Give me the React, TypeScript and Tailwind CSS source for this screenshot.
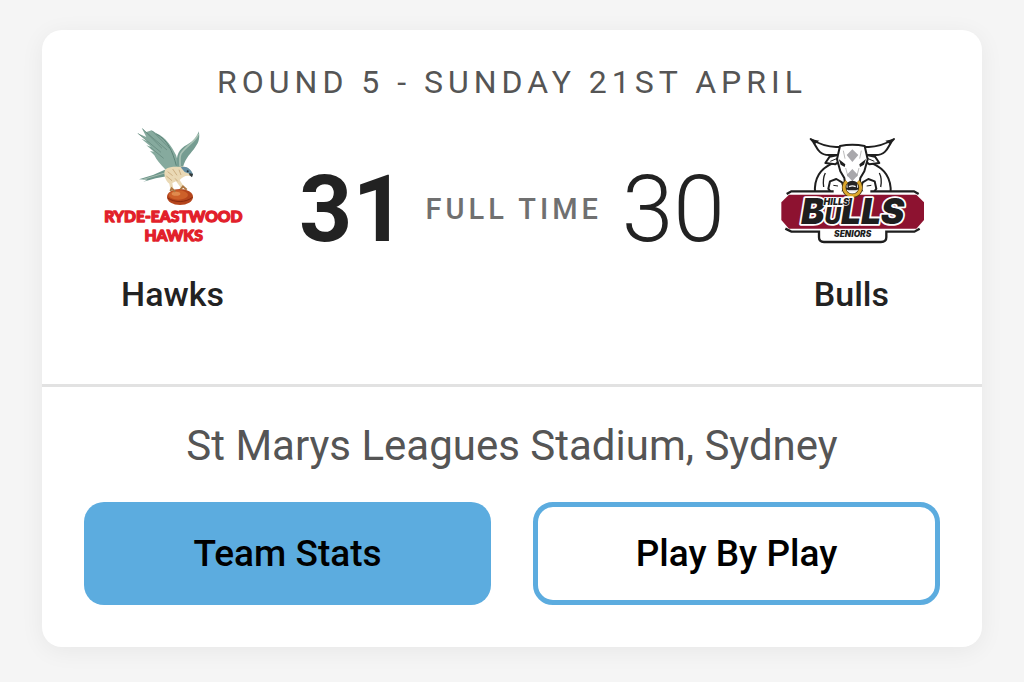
import React from 'react';

type Team = {
  name: string;
  score: number;
  Logo: () => React.ReactElement;
};

function HawksLogo() {
  return (
    <svg viewBox="0 0 480 405" className="h-[135px] w-[160px]" role="img" aria-label="Ryde-Eastwood Hawks">
      {/* wings */}
      <path
        d="M146 29 L160 42 L176 37 L190 46 C219 58 237 88 249 111 L261 151 L216 153 C204 141 190 126 184 112 L171 99 L183 101 L160 82 L174 86 L145 62 L164 70 L132 45 L160 57 Z"
        fill="#86aa9e"
      />
      <path d="M149 33 L207 91 M136 47 L204 103 M160 43 L222 96 M178 39 L230 91 M172 88 L212 121" stroke="#5f8379" strokeWidth="2" fill="none" />
      <path d="M190 48 C224 66 238 98 250 143" stroke="#5b8378" strokeWidth="3" fill="none" />
      <path d="M317 40 C313 59 301 70 282 80 C259 92 247 109 253 148 L270 147 C278 118 294 107 307 87 C319 73 321 56 317 40 Z" fill="#769d92" />
      <path d="M316 47 C308 72 279 83 264 107 C258 119 262 133 261 145" stroke="#a9c2b5" strokeWidth="5" fill="none" />
      {/* tail */}
      <path d="M219 154 L180 171 L138 184 L163 185 L151 191 L188 181 L225 174 Z" fill="#6d968b" />
      <path d="M151 184 L219 164" stroke="#a7beb0" strokeWidth="3" />
      {/* body and legs */}
      <path d="M216 155 C232 143 250 148 263 146 C281 144 292 153 298 167 L291 174 C278 171 270 176 260 186 L273 206 L266 212 L249 190 L238 195 L242 218 L233 220 L229 197 C217 188 211 170 216 155 Z" fill="#ead9b5" />
      <path d="M224 161 L239 173 M239 153 L252 172 M220 174 L237 188 M258 155 L264 171 M246 181 L254 190" stroke="#cdb083" strokeWidth="3" />
      <path d="M263 148 C279 141 294 153 300 168 L297 176 L289 167 L275 162 Z" fill="#648da1" />
      <path d="M289 165 L300 168 L297 178 L289 171 Z" fill="#353b3b" />
      <circle cx="284" cy="160" r="3" fill="#263238" />
      {/* ball */}
      <ellipse cx="261" cy="237" rx="39" ry="24" fill="#b5451c" />
      <ellipse cx="256" cy="231" rx="29" ry="14" fill="#cd6029" />
      <ellipse cx="249" cy="227" rx="13" ry="6" fill="#e08a4e" />
      <path d="M232 219 L236 211 L247 221 M262 215 L270 205 L281 215" stroke="#ad7742" strokeWidth="6" fill="none" />
      <path d="M224 240 C246 255 278 254 299 238" stroke="#87290e" strokeWidth="3" fill="none" />
      <g fill="#e21f2b" stroke="#e21f2b" strokeWidth="4" strokeLinejoin="round" fontFamily="Lato, sans-serif" fontWeight="900" fontSize="47" textAnchor="middle">
        <text x="241" y="311">RYDE-EASTWOOD</text>
        <text x="242" y="368">HAWKS</text>
      </g>
    </svg>
  );
}

function BullsLogo() {
  return (
    <svg viewBox="0 -20 480 405" className="h-[135px] w-[160px]" role="img" aria-label="Hills Bulls Seniors">
      {/* shoulders */}
      <path d="M185 116 C147 132 129 160 132 204 L359 204 C361 160 342 132 303 116 Z" fill="#fff" stroke="#1e1e1e" strokeWidth="6" />
      <path d="M163 145 C156 158 156 172 158 187 M325 145 C332 158 332 172 329 187" fill="none" stroke="#1e1e1e" strokeWidth="4" />
      {/* ears */}
      <path d="M204 90 L176 96 L163 115 L193 119 L210 105 Z M284 90 L312 96 L325 115 L295 119 L278 105 Z" fill="#fff" stroke="#1e1e1e" strokeWidth="6" strokeLinejoin="round" />
      <path d="M178 110 L199 101 M310 110 L289 101" stroke="#1e1e1e" strokeWidth="3" />
      {/* horns */}
      <path d="M209 66 C180 70 153 63 119 43 C136 56 136 91 173 91 L209 91 Z" fill="#fff" stroke="#1e1e1e" strokeWidth="6" strokeLinejoin="round" />
      <path d="M279 66 C308 70 335 63 369 43 C352 56 352 91 315 91 L279 91 Z" fill="#fff" stroke="#1e1e1e" strokeWidth="6" strokeLinejoin="round" />
      <path d="M119 43 L145 48 L132 58 Z M369 43 L343 48 L356 58 Z" fill="#1e1e1e" />
      {/* head */}
      <path d="M207 64 Q244 56 281 64 L290 104 L280 140 L268 160 L264 192 L224 192 L220 160 L208 140 L198 104 Z" fill="#fff" stroke="#1e1e1e" strokeWidth="6" strokeLinejoin="round" />
      <path d="M244 74 L262 91 L244 112 L227 91 Z M244 133 L261 151 L244 170 L227 151 Z" fill="#a9a8ac" />
      <path d="M203 103 L223 119 L221 127 L209 120 Z M285 103 L265 119 L267 127 L279 120 Z" fill="#1e1e1e" />
      <path d="M224 130 L231 156 M264 130 L257 156 M217 78 L222 102 M271 78 L266 102" stroke="#999" strokeWidth="2" />
      {/* fists */}
      <path d="M177 170 L196 163 L213 173 L219 192 L207 214 L184 210 L172 192 Z M311 170 L292 163 L275 173 L269 192 L281 214 L304 210 L316 192 Z" fill="#fff" stroke="#1e1e1e" strokeWidth="6" strokeLinejoin="round" />
      <path d="M187 182 L201 184 M301 182 L287 184" stroke="#1e1e1e" strokeWidth="3" />
      {/* banner */}
      <path d="M61 200 H430 L460 229 V290 L430 322 H349 V340 Q349 355 331 355 H158 Q141 355 141 339 V322 H61 L31 290 V229 Z" fill="#fff" />
      <path d="M54 210 H436 L459 233 V286 L436 312 H54 L31 286 V233 Z" fill="#8d1230" />
      <path d="M47 208 L61 200 H188 M298 200 H429 L443 208 M43 312 L61 321 H144 V338 Q144 352 159 352 H330 Q346 352 346 338 V321 H430 L446 312" fill="none" stroke="#1e1e1e" strokeWidth="7" />
      <path d="M165 218 H234 V246 H158 Z" fill="#fff" />
      {/* nose ring */}
      <path d="M228 174 Q244 162 260 174 L257 197 L231 197 Z" fill="#252525" />
      <path d="M234 186 Q244 181 254 186" stroke="#fff" strokeWidth="4" fill="none" />
      <path d="M227 170 A25 25 0 1 0 261 170" fill="none" stroke="#4c3912" strokeWidth="13" />
      <path d="M227 170 A25 25 0 1 0 261 170" fill="none" stroke="#dda82e" strokeWidth="9" />
      <g fontFamily="Inter, sans-serif" fontWeight="900" fontStyle="italic" textAnchor="middle" fill="#1e1e1e">
        <text x="245" y="299" fontSize="106" stroke="#fff" strokeWidth="11" paintOrder="stroke" strokeLinejoin="round">
          B<tspan fontSize="68">U</tspan>LLS
        </text>
        <text x="196" y="240" fontSize="27" stroke="#fff" strokeWidth="4" paintOrder="stroke">HILLS</text>
        <text x="245" y="337" fontSize="25">SENIORS</text>
      </g>
    </svg>
  );
}

const home: Team = { name: 'Hawks', score: 31, Logo: HawksLogo };
const away: Team = { name: 'Bulls', score: 30, Logo: BullsLogo };

function TeamColumn({ team }: { team: Team }) {
  return (
    <div className="flex flex-col items-center">
      <team.Logo />
      <h2 className="mt-[21px] text-[34px] leading-10 font-medium text-[#222]">{team.name}</h2>
    </div>
  );
}

export default function App() {
  return (
    <main className="min-h-screen bg-[#f5f5f5] px-[42px] pt-[30px] pb-[35px] font-['Roboto',sans-serif]">
      <article className="rounded-[20px] bg-white shadow-[0_4px_24px_rgba(0,0,0,0.06)]">
        <section className="border-b-3 border-[#e2e2e2] pt-8 pb-[70px]">
          <p className="text-center text-[32px] leading-10 tracking-[5px] text-[#555] uppercase">
            Round 5 - Sunday 21st April
          </p>
          <div className="mt-4 grid grid-cols-[5fr_8fr_5fr]">
            <TeamColumn team={home} />
            <div className="-mx-1 flex items-center justify-between self-start pt-11 whitespace-nowrap">
              <span className="text-[93px] leading-24 font-bold text-[#222]">{home.score}</span>
              <span className="text-[29px] font-medium tracking-[4px] text-[#707070] uppercase">Full Time</span>
              <span className="text-[93px] leading-24 font-light text-[#222]">{away.score}</span>
            </div>
            <TeamColumn team={away} />
          </div>
        </section>

        <section className="px-[42px] pt-[35px] pb-[42px]">
          <p className="text-center text-[42px] leading-12 text-[#555]">St Marys Leagues Stadium, Sydney</p>
          <div className="mt-8 grid grid-cols-2 gap-[42px] text-[37px] font-medium text-black">
            <button type="button" className="h-[103px] rounded-[20px] bg-[#5cacdf]">Team Stats</button>
            <button type="button" className="h-[103px] rounded-[20px] border-5 border-[#5cacdf] bg-white">Play By Play</button>
          </div>
        </section>
      </article>
    </main>
  );
}
